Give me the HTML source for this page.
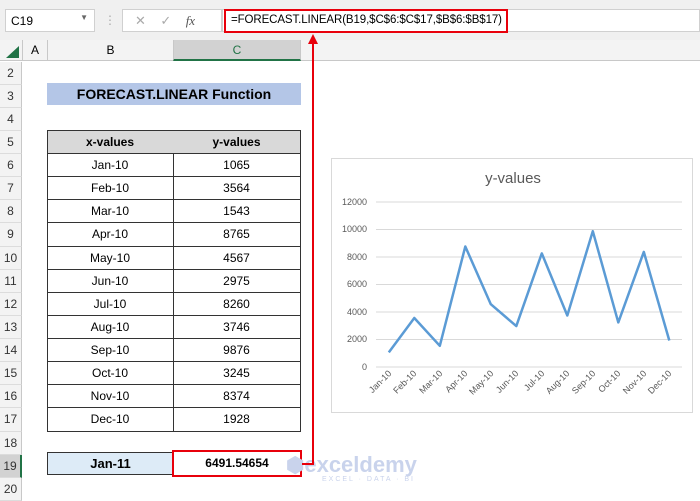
<!DOCTYPE html><html><head><style>
body{margin:0;width:700px;height:498px;overflow:hidden;background:#fff;font-family:"Liberation Sans",Calibri,sans-serif;position:relative}
div{position:absolute;box-sizing:border-box}
.rh{left:0;width:22px;height:23.125px;background:#f3f3f3;border-right:1px solid #c8c8c8;border-bottom:1px solid #dcdcdc;font-size:12px;color:#333;text-align:center;line-height:23px}
.c{height:23.125px;border-right:1px solid #333;border-bottom:1px solid #333;font-size:12px;text-align:center;line-height:22px;color:#000}
</style></head><body>
<div style="left:0;top:0;width:700px;height:40px;background:#f0f0f0"></div>
<div style="left:5px;top:9px;width:90px;height:23px;background:#fff;border:1px solid #d0d0d0;font-size:12px;padding:4px 5px">C19<span style="position:absolute;right:6px;top:3px;font-size:8px;color:#666">▼</span></div>
<div style="left:104px;top:13px;color:#aaa;font-size:12px">⋮</div>
<div style="left:122px;top:9px;width:100px;height:23px;background:#fff;border:1px solid #d0d0d0;font-size:13px;color:#aaa;padding:3px 12px">✕&nbsp;&nbsp;&nbsp;&nbsp;✓&nbsp;&nbsp;&nbsp;&nbsp;<i style="color:#555;font-family:'Liberation Serif'">fx</i></div>
<div style="left:222px;top:9px;width:478px;height:23px;background:#fff;border:1px solid #d0d0d0"></div>
<div style="left:224px;top:9px;width:284px;height:24px;border:2px solid #e8000b;font-size:11.5px;padding:3px 5px;white-space:nowrap;letter-spacing:-0.1px">=FORECAST.LINEAR(B19,$C$6:$C$17,$B$6:$B$17)</div>
<div style="left:0;top:40px;width:700px;height:21px;background:#f3f3f3;border-bottom:1px solid #c8c8c8"></div>
<div style="left:6px;top:46px;width:0;height:0;border-left:13px solid transparent;border-bottom:12px solid #217346"></div>
<div style="left:22px;top:40px;width:25px;height:21px;border-left:1px solid #c8c8c8;font-size:12px;text-align:center;line-height:21px">A</div>
<div style="left:47px;top:40px;width:126px;height:21px;border-left:1px solid #c8c8c8;font-size:12px;text-align:center;line-height:21px">B</div>
<div style="left:173px;top:40px;width:128px;height:21px;background:#d2d2d2;border-left:1px solid #c8c8c8;border-right:1px solid #c8c8c8;border-bottom:2px solid #217346;font-size:12px;text-align:center;line-height:20px;color:#217346">C</div>
<div class="rh" style="top:61.5px">2</div><div class="rh" style="top:84.6px">3</div><div class="rh" style="top:107.75px">4</div><div class="rh" style="top:130.9px">5</div><div class="rh" style="top:154px">6</div><div class="rh" style="top:177.1px">7</div><div class="rh" style="top:200.25px">8</div><div class="rh" style="top:223.4px">9</div><div class="rh" style="top:246.5px">10</div><div class="rh" style="top:269.6px">11</div><div class="rh" style="top:292.75px">12</div><div class="rh" style="top:315.9px">13</div><div class="rh" style="top:339px">14</div><div class="rh" style="top:362.1px">15</div><div class="rh" style="top:385.25px">16</div><div class="rh" style="top:408.4px">17</div><div class="rh" style="top:431.5px">18</div><div class="rh" style="top:454.6px;background:#d2d2d2;border-right:2px solid #217346">19</div><div class="rh" style="top:477.75px">20</div>
<div style="left:47px;top:83px;width:254px;height:22px;background:#b4c6e7;font-weight:bold;font-size:14px;text-align:center;line-height:22px">FORECAST.LINEAR Function</div>
<div class="c" style="left:47px;top:130.9px;width:127px;background:#d9d9d9;font-weight:bold">x-values</div><div class="c" style="left:173px;top:130.9px;width:128px;background:#d9d9d9;font-weight:bold">y-values</div>
<div class="c" style="left:47px;top:154px;width:127px">Jan-10</div><div class="c" style="left:173px;top:154px;width:128px">1065</div>
<div class="c" style="left:47px;top:177.1px;width:127px">Feb-10</div><div class="c" style="left:173px;top:177.1px;width:128px">3564</div>
<div class="c" style="left:47px;top:200.25px;width:127px">Mar-10</div><div class="c" style="left:173px;top:200.25px;width:128px">1543</div>
<div class="c" style="left:47px;top:223.4px;width:127px">Apr-10</div><div class="c" style="left:173px;top:223.4px;width:128px">8765</div>
<div class="c" style="left:47px;top:246.5px;width:127px">May-10</div><div class="c" style="left:173px;top:246.5px;width:128px">4567</div>
<div class="c" style="left:47px;top:269.6px;width:127px">Jun-10</div><div class="c" style="left:173px;top:269.6px;width:128px">2975</div>
<div class="c" style="left:47px;top:292.75px;width:127px">Jul-10</div><div class="c" style="left:173px;top:292.75px;width:128px">8260</div>
<div class="c" style="left:47px;top:315.9px;width:127px">Aug-10</div><div class="c" style="left:173px;top:315.9px;width:128px">3746</div>
<div class="c" style="left:47px;top:339px;width:127px">Sep-10</div><div class="c" style="left:173px;top:339px;width:128px">9876</div>
<div class="c" style="left:47px;top:362.1px;width:127px">Oct-10</div><div class="c" style="left:173px;top:362.1px;width:128px">3245</div>
<div class="c" style="left:47px;top:385.25px;width:127px">Nov-10</div><div class="c" style="left:173px;top:385.25px;width:128px">8374</div>
<div class="c" style="left:47px;top:408.4px;width:127px">Dec-10</div><div class="c" style="left:173px;top:408.4px;width:128px">1928</div>
<div style="left:47px;top:130.4px;width:254px;height:301.6px;border:1.5px solid #333"></div>
<div style="left:47px;top:452px;width:127px;height:23px;border:1px solid #333;background:#ddebf7;font-weight:bold;font-size:13px;text-align:center;line-height:21px">Jan-11</div>
<div style="left:172px;top:450px;width:130px;height:27px;border:2.5px solid #e8000b;font-weight:bold;font-size:12px;text-align:center;line-height:22px">6491.54654</div>
<div style="left:286px;top:452px;font-size:21px;font-weight:bold;color:#c9d3ec">⬢<span style="font-size:22px">exceldemy</span></div>
<div style="left:322px;top:476px;font-size:7px;color:#c9d3ec;letter-spacing:2px">EXCEL · DATA · BI</div>
<svg style="position:absolute;left:0;top:0" width="700" height="498">
<line x1="313" y1="42" x2="313" y2="464" stroke="#e8000b" stroke-width="2"/>
<line x1="302" y1="464" x2="314" y2="464" stroke="#e8000b" stroke-width="2"/>
<polygon points="313,34 308,44 318,44" fill="#e8000b"/>
<rect x="331.5" y="158.5" width="361" height="254" fill="#fff" stroke="#d9d9d9"/>
<text x="513" y="183" font-size="15" fill="#595959" text-anchor="middle" font-family="Liberation Sans">y-values</text>
<g stroke="#d9d9d9" stroke-width="1">
<line x1="376" x2="682" y1="202" y2="202"/><line x1="376" x2="682" y1="229.5" y2="229.5"/><line x1="376" x2="682" y1="257" y2="257"/><line x1="376" x2="682" y1="284.5" y2="284.5"/><line x1="376" x2="682" y1="312" y2="312"/><line x1="376" x2="682" y1="339.5" y2="339.5"/><line x1="376" x2="682" y1="367" y2="367"/>
</g>
<g font-size="9" fill="#595959" text-anchor="end" font-family="Liberation Sans">
<text x="367" y="205">12000</text><text x="367" y="232">10000</text><text x="367" y="260">8000</text><text x="367" y="287">6000</text><text x="367" y="315">4000</text><text x="367" y="342">2000</text><text x="367" y="370">0</text>
</g>
<polyline fill="none" stroke="#5b9bd5" stroke-width="2.5" stroke-linejoin="round" points="388.8,352.4 414.3,318 439.8,345.8 465.3,246.5 490.8,304.2 516.3,326.1 541.8,253.4 567.3,315.5 592.8,231.2 618.3,322.4 643.8,251.9 669.3,340.5"/>
<g font-size="9" fill="#595959" text-anchor="end" font-family="Liberation Sans">
<text transform="translate(392,374) rotate(-45)">Jan-10</text><text transform="translate(417,374) rotate(-45)">Feb-10</text><text transform="translate(443,374) rotate(-45)">Mar-10</text><text transform="translate(468,374) rotate(-45)">Apr-10</text><text transform="translate(494,374) rotate(-45)">May-10</text><text transform="translate(519,374) rotate(-45)">Jun-10</text><text transform="translate(545,374) rotate(-45)">Jul-10</text><text transform="translate(570,374) rotate(-45)">Aug-10</text><text transform="translate(596,374) rotate(-45)">Sep-10</text><text transform="translate(621,374) rotate(-45)">Oct-10</text><text transform="translate(647,374) rotate(-45)">Nov-10</text><text transform="translate(672,374) rotate(-45)">Dec-10</text>
</g>
</svg>
</body></html>
